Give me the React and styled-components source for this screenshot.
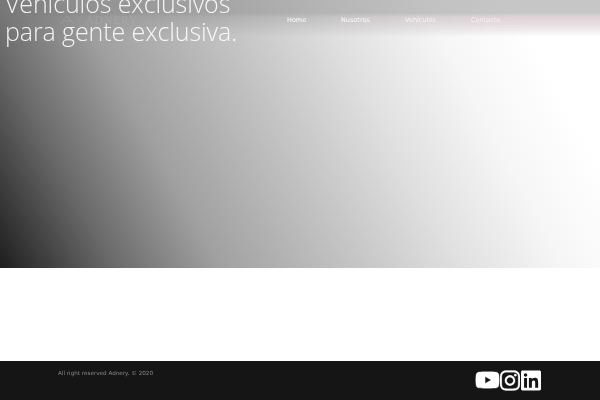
import React from 'react'
import styled, { createGlobalStyle } from 'styled-components'
import { FaYoutube, FaInstagram, FaLinkedin } from 'react-icons/fa'

const Global = createGlobalStyle`
  html, body { margin: 0; padding: 0; background: #fff; }
  body { font-family: "DejaVu Sans", sans-serif; }
`

const Page = styled.div`
  width: 600px;
  height: 400px;
  display: flex;
  flex-direction: column;
  overflow: hidden;
`

const Hero = styled.section`
  position: relative;
  height: 268px;
  overflow: hidden;
  background: linear-gradient(62deg, #1e1e1e 0%, #6a6a6a 15.5%, #a0a0a0 29.6%, #c6c6c6 48.8%, #e0e0e0 62%, #f6f6f6 76%, #ffffff 88%);
`

const Header = styled.header`
  position: relative;
  height: 38px;
  display: flex;
  align-items: flex-start;
  background: linear-gradient(
    to bottom,
    rgba(120, 120, 120, 0.42) 0,
    rgba(120, 120, 120, 0.42) 13px,
    rgba(120, 120, 120, 0.28) 17px,
    rgba(120, 120, 120, 0.14) 27px,
    rgba(120, 120, 120, 0) 37px
  );

  &::after {
    content: "";
    position: absolute;
    top: 13px;
    left: 300px;
    right: 0;
    height: 23px;
    background: linear-gradient(to bottom, rgba(235, 200, 212, 0) 0, rgba(235, 200, 212, 0.4) 4px, rgba(235, 200, 212, 0) 100%);
    mask-image: linear-gradient(to right, transparent, #000 70%);
  }
`

const Logo = styled.div`
  width: 287px;
  padding: 14px 0 0 60px;
  box-sizing: border-box;
  display: flex;
  align-items: center;
  gap: 10px;
  font-family: "Liberation Serif", serif;
  font-size: 12px;
  line-height: 12px;
  letter-spacing: 0.6px;
  color: rgba(255, 255, 255, 0.1);
`

const Nav = styled.nav`
  display: flex;
  padding-top: 16px;
`

const NavLink = styled.a`
  width: ${p => p.$w}px;
  font-size: 6.5px;
  line-height: 9px;
  color: #fff;
  white-space: nowrap;
  filter: blur(0.25px);
`

const Title = styled.h1`
  position: absolute;
  left: 5px;
  top: -11px;
  margin: 0;
  font-family: "Open Sans", sans-serif;
  font-weight: 300;
  font-size: 25px;
  line-height: 28px;
  letter-spacing: -0.1px;
  color: #fff;
  opacity: 0.9;
`

const Spacer = styled.div`
  flex: 1;
  background: #fff;
`

const Footer = styled.footer`
  height: 39px;
  background: #151515;
  display: flex;
  justify-content: space-between;
  padding: 0 59px 0 58px;
`

const Copy = styled.p`
  margin: 8px 0 0;
  font-size: 5.65px;
  line-height: 8px;
  color: #8a8a8a;
  filter: blur(0.25px);
`

const Icons = styled.div`
  display: flex;
  align-items: center;
  height: 38px;
  color: #fff;
  svg { display: block; }
`

const Youtube = styled(FaYoutube)`
  width: 25px;
  height: 22px;
  stroke: currentColor;
  stroke-width: 8px;
`

const Instagram = styled(FaInstagram)`
  width: 20px;
  height: 23px;
  stroke: currentColor;
  stroke-width: 6px;
`

const Linkedin = styled(FaLinkedin)`
  width: 20px;
  height: 23px;
  margin-left: 1px;
`

export default function App() {
  return (
    <Page>
      <Global />
      <Hero>
        <Header>
          <Logo>
            <svg width="15" height="10" viewBox="0 0 15 10" fill="none" stroke="currentColor">
              <path d="M1 9 L7 1 L14 9 M4 6 H11" />
            </svg>
            ADNERY
          </Logo>
          <Nav>
            <NavLink $w={54}>Home</NavLink>
            <NavLink $w={64}>Nusotros</NavLink>
            <NavLink $w={66}>Vehículos</NavLink>
            <NavLink $w={30}>Contacto</NavLink>
          </Nav>
        </Header>
        <Title>Vehículos exclusivos<br />para gente exclusiva.</Title>
      </Hero>
      <Spacer />
      <Footer>
        <Copy>All right reserved Adnery. © 2020</Copy>
        <Icons>
          <Youtube />
          <Instagram />
          <Linkedin />
        </Icons>
      </Footer>
    </Page>
  )
}
